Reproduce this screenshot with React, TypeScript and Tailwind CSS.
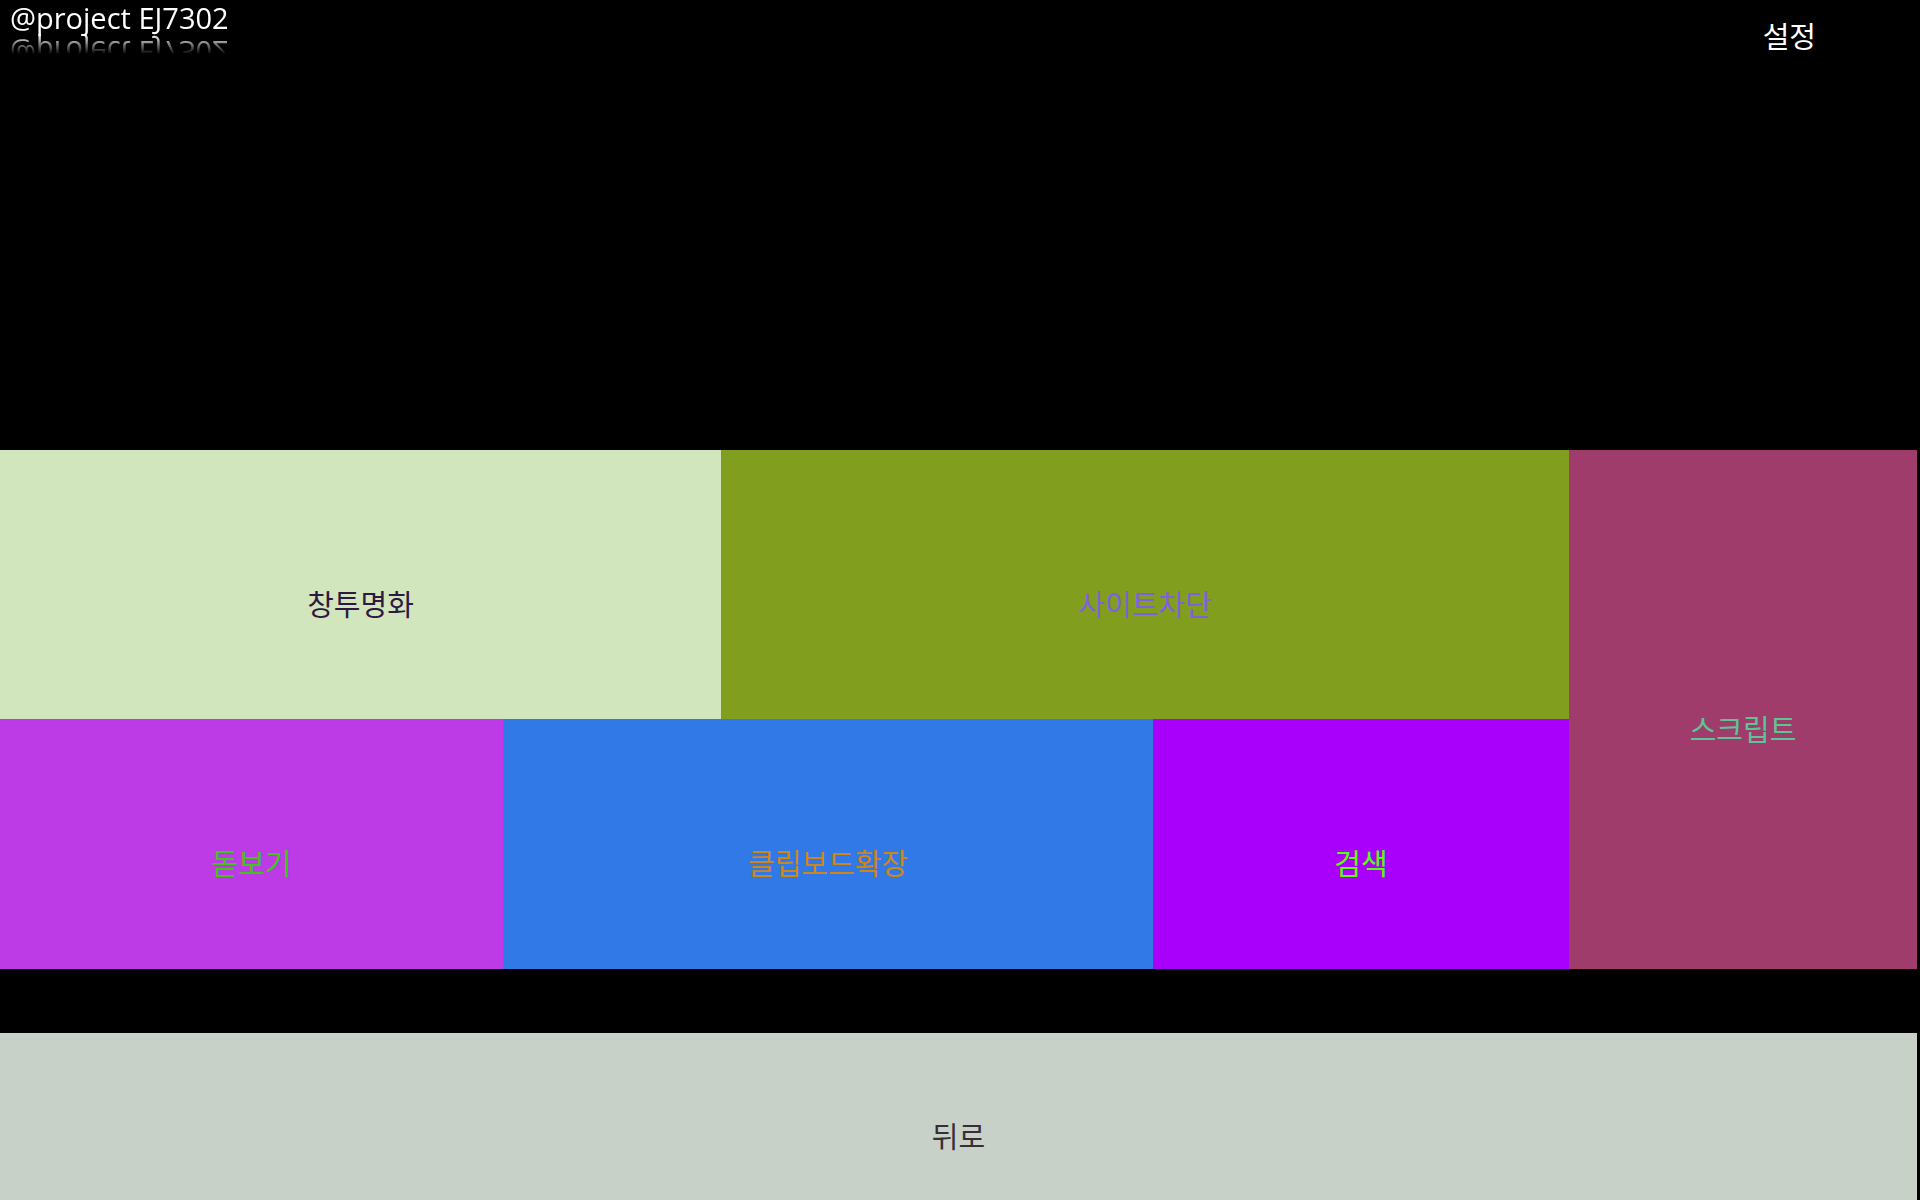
const tile =
  "flex items-center justify-center pt-10 text-[29px] leading-10 font-normal cursor-pointer";

export default function App() {
  return (
    <div className="flex min-h-screen flex-col bg-black pr-[3px] font-['Open_Sans','Noto_Sans_CJK_KR',sans-serif] text-white">
      <header className="flex h-[450px] items-start justify-between pl-2.5">
        <h1 className="text-[29px] leading-9 font-normal [-webkit-box-reflect:below_-2px_linear-gradient(transparent_44%,white)]">
          @project EJ7302
        </h1>
        <button type="button" className="mt-[17px] mr-[101px] cursor-pointer text-[29px] leading-10 font-normal">
          설정
        </button>
      </header>

      <main className="grid h-[519px] grid-cols-[1569fr_348fr]">
        <div className="grid grid-rows-[269fr_250fr]">
          <div className="grid grid-cols-[721fr_848fr]">
            <button type="button" className={`${tile} bg-[#d1e6bc] text-[#2e1943]`}>창투명화</button>
            <button type="button" className={`${tile} bg-[#819e1e] text-[#7e61e1]`}>사이트차단</button>
          </div>
          <div className="grid grid-cols-[503fr_650fr_416fr]">
            <button type="button" className={`${tile} bg-[#bd3be6] text-[#42c419]`}>돋보기</button>
            <button type="button" className={`${tile} bg-[#3279e8] text-[#cd8617]`}>클립보드확장</button>
            <button type="button" className={`${tile} bg-[#a800fa] text-[#57ff05]`}>검색</button>
          </div>
        </div>
        <button type="button" className={`${tile} bg-[#9f3c6c] text-[#60c393]`}>스크립트</button>
      </main>

      <footer className="mt-16 flex flex-1">
        <button type="button" className={`${tile} flex-1 bg-[#c8d1c8] text-[#372e37]`}>뒤로</button>
      </footer>
    </div>
  );
}
